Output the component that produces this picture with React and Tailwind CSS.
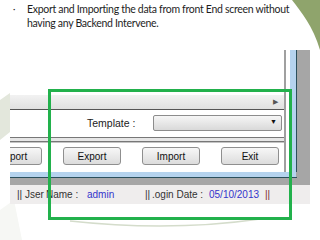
export default function App() {
  return (
    <div className="relative w-[320px] h-[240px] overflow-hidden bg-white">
      {/* slide decorations */}
      <svg className="absolute left-0 top-0" width="320" height="240" viewBox="0 0 320 240">
        <path d="M292 0 C301 12 313 26 320 50 L320 0 Z" fill="#8fa46c" />
        <path d="M0 100 L10 93 L10 132 L0 140 Z" fill="#e3e7dc" />
        <path d="M0 210 L14 200 L22 240 L0 240 Z" fill="#f6f7f4" />
        <path d="M70 221 Q170 232 260 219" stroke="#d4dccb" strokeWidth="1.5" fill="none" />
      </svg>

      {/* bullet text */}
      <div
        className="relative flex pt-[2px] pl-[13px] text-[10.5px] leading-[14px] tracking-[-0.3px] text-[#1e1e1e]"
        style={{ fontFamily: 'Lato, "Open Sans", sans-serif' }}
      >
        <span className="w-[14px] shrink-0 text-[9px]">·</span>
        <p className="w-[272px]">
          Export and Importing the data from front End screen without having any Backend Intervene.
        </p>
      </div>

      {/* embedded screenshot */}
      <div
        className="absolute left-[10px] top-[50px] w-[300px] flex flex-col text-[10px]"
        style={{ fontFamily: '"Liberation Sans", Arial, sans-serif' }}
      >
        <div className="flex">
          <div className="w-[276px] border-r-2 border-[#a0a0a0] overflow-hidden flex flex-col">
            <div className="h-[45px]" />
            {/* scroll band */}
            <div className="h-[15px] flex items-center justify-end pr-[6px] bg-gradient-to-b from-[#f2f2f2] to-[#e0e0e0] border-b border-[#555]">
              <span className="text-[7px] text-[#555]">▶</span>
            </div>
            {/* template row */}
            <div className="h-[27px] flex items-center bg-white">
              <span className="ml-[77px] w-[50px] text-[10.5px] text-[#222] whitespace-nowrap">Template :</span>
              <div className="ml-[16px] w-[129px] h-[16px] mb-[2px] rounded-[2px] border border-[#8c8c8c] bg-gradient-to-b from-[#f6f6f6] to-[#d9d9d9] flex items-center justify-end pr-[4px]">
                <span className="text-[7px] text-[#111]">▼</span>
              </div>
            </div>
            {/* separator */}
            <div className="h-[5px] border-t border-b border-[#777] bg-[#e6e6e6]" />
            {/* button panel */}
            <div className="h-[30px] bg-white border-t border-[#c4c4c4] flex items-start pt-[4px]">
              {['Import', 'Export', 'Import', 'Exit'].map((label, i) => (
                <div
                  key={i}
                  className={
                    'shrink-0 w-[58px] h-[18px] rounded-[3px] border border-[#8f8f8f] bg-gradient-to-b from-[#f7f7f7] to-[#dcdcdc] flex items-center justify-center text-[#111] ' +
                    (i === 0 ? 'ml-[-26px]' : 'ml-[21px]')
                  }
                >
                  {label}
                </div>
              ))}
            </div>
          </div>
          <div className="w-[4px] bg-white" />
          <div className="w-[6px] bg-[#b5d3ee]" />
          <div className="w-[1px] bg-[#2b4f5c]" />
          <div className="w-[13px] bg-[#a6a6a6]" />
        </div>
        {/* window bottom edge */}
        <div className="flex h-[5px]">
          <div className="w-[286px] bg-[#b5d3ee]" />
          <div className="flex-1 bg-[#a6a6a6]" />
        </div>
        <div className="flex h-[1px]">
          <div className="w-[287px] bg-[#2b4f5c]" />
          <div className="flex-1 bg-[#a6a6a6]" />
        </div>
        <div className="h-[7px] bg-[#a6a6a6]" />
        {/* status bar */}
        <div className="h-[19px] bg-[#efeded] flex items-center pl-[7px] text-[10px] whitespace-nowrap">
          <span className="w-[8px] shrink-0 text-[#333]">||</span>
          <span className="w-[21px] shrink-0 text-[#333]">Jser</span>
          <span className="w-[41px] shrink-0 text-[#333]">Name :</span>
          <span className="w-[58px] shrink-0 text-[#3434cc]">admin</span>
          <span className="w-[7px] shrink-0 text-[#333]">||</span>
          <span className="w-[57px] shrink-0 text-[#333]">.ogin Date :</span>
          <span className="w-[56px] shrink-0 text-[#3434cc]">05/10/2013</span>
          <span className="shrink-0 text-[#7a2a2a]">||</span>
        </div>
      </div>

      {/* highlight rectangle */}
      <div className="absolute left-[48px] top-[89px] w-[244px] h-[131px] border-[3px] border-[#22b14c]" />
    </div>
  )
}
